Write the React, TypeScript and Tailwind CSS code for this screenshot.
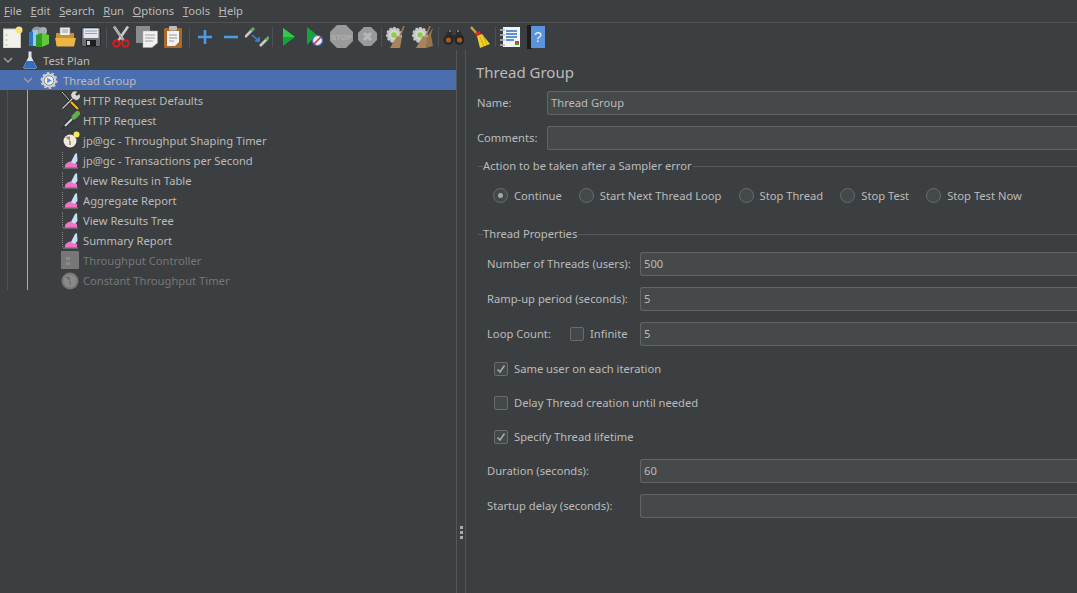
import React from 'react';

const Doc = () => (
    <svg width="20" height="22" viewBox="0 0 20 22">
        <rect x="0.5" y="3" width="17" height="19" fill="#f2f2ea" stroke="#c8c8c0" />
        <circle cx="3.5" cy="9" r="0.8" fill="#aaa" /><circle cx="3.5" cy="14" r="0.8" fill="#aaa" /><circle cx="3.5" cy="19" r="0.8" fill="#aaa" />
        <circle cx="16" cy="4" r="3.5" fill="#f6e27a" />
    </svg>
);
const Templates = () => (
    <svg width="20" height="22" viewBox="0 0 20 22">
        <circle cx="8" cy="6" r="5.5" fill="#8f9a9a" />
        <circle cx="14" cy="5" r="4" fill="#a6aeae" />
        <rect x="0" y="6" width="6" height="14" fill="#2a78c8" />
        <rect x="4" y="4" width="5" height="16" fill="#9fc8e8" />
        <path d="M7 9 L13 7 L13 21 L7 21 Z" fill="#2f9a24" />
        <path d="M13 7 L20 9 L20 18 L13 21 Z" fill="#62c83c" />
    </svg>
);
const OpenFolder = () => (
    <svg width="21" height="20" viewBox="0 0 21 20">
        <path d="M5 0.5 H15 V9 H5 Z" fill="#eee" stroke="#888" strokeWidth="0.6" />
        <path d="M7 3 H13 M7 5 H13" stroke="#999" />
        <path d="M1 6 H5 V8 H15 V6 H19 V18 a1 1 0 0 1 -1 1 H2 a1 1 0 0 1 -1 -1 Z" fill="#c9922e" />
        <path d="M0 11 H21 L19 19.5 H2 Z" fill="#eab544" />
    </svg>
);
const Floppy = () => (
    <svg width="20" height="20" viewBox="0 0 20 20">
        <rect x="0.5" y="0.5" width="19" height="19" rx="1.5" fill="#6b6f78" stroke="#2e2e2e" />
        <rect x="2.5" y="1.5" width="15" height="9.5" fill="#e4e8ee" />
        <path d="M4 4 H16 M4 6.5 H16" stroke="#8ca0b8" />
        <rect x="5" y="13" width="10" height="6" fill="#1f1f1f" />
        <rect x="6" y="14" width="3" height="4" fill="#ccc" />
    </svg>
);
const Scissors = () => (
    <svg width="18" height="22" viewBox="0 0 18 22">
        <path d="M2 0.5 L12 15 M16 0.5 L6 15" stroke="#c8c8c8" strokeWidth="2.6" />
        <path d="M2 0.5 L12 15" stroke="#888" strokeWidth="0.8" />
        <circle cx="4.5" cy="17.5" r="3.2" fill="none" stroke="#cf1f1f" strokeWidth="2.2" />
        <circle cx="13.5" cy="17.5" r="3.2" fill="none" stroke="#cf1f1f" strokeWidth="2.2" />
    </svg>
);
const Copy = () => (
    <svg width="22" height="22" viewBox="0 0 22 22">
        <rect x="0" y="0" width="14" height="17" fill="#8a8c8e" />
        <path d="M7 5 H21.5 V17 L16 21.5 H7 Z" fill="#f1f1f1" stroke="#aaa" strokeWidth="0.5" />
        <path d="M9 9 H19 M9 12 H19 M9 15 H17" stroke="#a0a0a0" />
    </svg>
);
const Paste = () => (
    <svg width="18" height="22" viewBox="0 0 18 22">
        <rect x="0" y="2" width="18" height="20" rx="1" fill="#a8692a" />
        <path d="M3 5 H15 V16 L11 20 H3 Z" fill="#f3f3f3" />
        <path d="M5 9 H13 M5 12 H13 M5 15 H10" stroke="#999" />
        <rect x="5" y="0" width="8" height="4.5" rx="1" fill="#b9bcbe" />
    </svg>
);
const Plus = () => (
    <svg width="16" height="16" viewBox="0 0 16 16">
        <path d="M8 1 V15 M1 8 H15" stroke="#4d9be0" strokeWidth="2.6" />
    </svg>
);
const Minus = () => (
    <svg width="16" height="16" viewBox="0 0 16 16">
        <path d="M1 8 H15" stroke="#4d9be0" strokeWidth="2.6" />
    </svg>
);
const Toggle = () => (
    <svg width="24" height="20" viewBox="0 0 24 20">
        <path d="M0 10 L7 3" stroke="#c9c9c9" strokeWidth="2.6" />
        <path d="M6 4 L9 1" stroke="#5fae5f" strokeWidth="3" />
        <path d="M15 19 L22 12" stroke="#c9c9c9" strokeWidth="2.6" />
        <path d="M21 13 L24 10" stroke="#5fae5f" strokeWidth="3" />
        <path d="M7 8 L14 14 M14 10 V14 H10" stroke="#3a86d8" strokeWidth="1.6" fill="none" />
    </svg>
);
const Play = () => (
    <svg width="12" height="18" viewBox="0 0 12 18">
        <path d="M0 0 L12 9 L0 18 Z" fill="#13a538" />
        <path d="M0 0 L12 9 L0 9 Z" fill="#30c850" />
    </svg>
);
const PlayNoPause = () => (
    <svg width="16" height="19" viewBox="0 0 16 19">
        <path d="M0 0 L10 8 L0 18 Z" fill="#13a538" />
        <circle cx="10.5" cy="13.5" r="5" fill="#e8eef8" stroke="#4474c4" strokeWidth="1.2" />
        <path d="M7 17 L14 10" stroke="#d83030" strokeWidth="1.6" />
    </svg>
);
const Stop = () => (
    <svg width="23" height="23" viewBox="0 0 23 23">
        <path d="M7 0 H16 L23 7 V16 L16 23 H7 L0 16 V7 Z" fill="#9a9a9a" />
        <text x="11.5" y="14.5" textAnchor="middle" fontSize="7.5" fontWeight="700" fill="#b0b0b0" fontFamily="Liberation Sans, sans-serif">STOP</text>
    </svg>
);
const Shutdown = () => (
    <svg width="19" height="19" viewBox="0 0 19 19">
        <path d="M6 0 H13 L19 6 V13 L13 19 H6 L0 13 V6 Z" fill="#9a9a9a" />
        <path d="M6 6 L13 13 M13 6 L6 13" stroke="#b8b8b8" strokeWidth="3" />
    </svg>
);
const GearBroom = ({ double = false }: { double?: boolean }) => (
    <svg width="22" height="22" viewBox="0 0 22 22">
        <circle cx="9" cy="9" r="7" fill="#c8c8c8" stroke="#c8c8c8" strokeWidth="2" strokeDasharray="2.5 1.5" />
        <circle cx="9" cy="9" r="4.5" fill="#d8d8d8" />
        <circle cx="9" cy="9" r="2.8" fill="#8ccf3c" />
        <path d="M19 0 L15 10" stroke="#9a7a50" strokeWidth="1.6" />
        <path d="M12 10 L17 11 L15 22 L5 22 Z" fill="#a8845a" />
        {double && <path d="M22 2 L20 9 L22 20 L15 22 L17 9 Z" fill="#96744e" />}
    </svg>
);
const Binoculars = () => (
    <svg width="22" height="18" viewBox="0 0 22 18">
        <path d="M5 2 H9 V7 H13 V2 H17 L21 11 H1 Z" fill="#2c2c2c" />
        <circle cx="5.5" cy="12" r="5" fill="#262626" /><circle cx="16.5" cy="12" r="5" fill="#262626" />
        <circle cx="5.5" cy="12" r="2.6" fill="#a85a1e" /><circle cx="16.5" cy="12" r="2.6" fill="#a85a1e" />
        <path d="M6 3 H8 M14 3 H16" stroke="#bbb" />
    </svg>
);
const YellowBroom = () => (
    <svg width="22" height="22" viewBox="0 0 22 22">
        <path d="M2 1 L9 9" stroke="#d0a23a" strokeWidth="2.4" />
        <path d="M6 7 L11 5 L12 9 L8 11 Z" fill="#d82828" />
        <path d="M8 10 L13 8 L21 18 L11 22 Z" fill="#f0d02a" />
        <path d="M11 11 L15 20 M14 10 L18 19" stroke="#c8a818" />
    </svg>
);
const FunctionList = () => (
    <svg width="20" height="22" viewBox="0 0 20 22">
        <rect x="3" y="1" width="17" height="20" fill="#f4f4f4" />
        <path d="M0 4 H5 M0 9 H5 M0 14 H5 M0 19 H5" stroke="#bbb" strokeWidth="1.5" />
        <path d="M6 5 H17 M6 8 H17 M6 11 H17 M6 14 H14" stroke="#2f6fc4" strokeWidth="1.5" />
        <rect x="15" y="15" width="4" height="2" fill="#c04040" /><rect x="15" y="17" width="4" height="2" fill="#38a038" />
    </svg>
);
const HelpBook = () => (
    <svg width="18" height="24" viewBox="0 0 18 24">
        <rect x="0" y="0" width="5" height="24" fill="#1c1c1c" />
        <rect x="4" y="1" width="14" height="22" fill="#5a94dc" />
        <text x="11" y="17" textAnchor="middle" fontSize="14" fill="#e8f0fa" fontFamily="Liberation Sans, sans-serif">?</text>
    </svg>
);

const Flask = () => (
    <svg width="14" height="18" viewBox="0 0 14 18">
        <path d="M5.5 0.5 H8.5 V6 L13.5 16 a1 1 0 0 1 -1 1.5 H1.5 a1 1 0 0 1 -1 -1.5 L5.5 6 Z" fill="#dfe6ee" />
        <path d="M3.6 10 H10.4 L13.2 16 a1 1 0 0 1 -1 1.2 H1.8 a1 1 0 0 1 -1 -1.2 Z" fill="#2f6ec6" />
    </svg>
);
const ThreadGear = () => (
    <svg width="19" height="19" viewBox="0 0 19 19">
        <circle cx="9.5" cy="9.5" r="7.5" fill="#d6d9dc" stroke="#c6cace" strokeWidth="3" strokeDasharray="2.5 2.2" />
        <circle cx="9.5" cy="9.5" r="5" fill="#eef0f3" stroke="#555" strokeWidth="0.7" />
        <path d="M7.5 6.5 L12.5 9.5 L7.5 12.5 Z" fill="#5b8fd4" />
    </svg>
);
const Tools = () => (
    <svg width="19" height="19" viewBox="0 0 19 19">
        <path d="M1 1 L9 10" stroke="#1e1e1e" strokeWidth="2.2" />
        <path d="M1 1 L9 10" stroke="#d8d8d8" strokeWidth="1" />
        <path d="M9.5 10.5 L17 18" stroke="#1e1e1e" strokeWidth="3.6" />
        <path d="M9.5 10.5 L17 18" stroke="#eeb91e" strokeWidth="2.4" />
        <path d="M1.5 17.5 L12 7" stroke="#1e1e1e" strokeWidth="2.6" />
        <path d="M1.5 17.5 L12 7" stroke="#cfcfcf" strokeWidth="1.2" />
        <path d="M11.5 7.5 A4 4 0 0 1 16.5 0.8 L14.5 3.2 L15.8 4.6 L18.5 2.8 A4 4 0 0 1 13 8.5 Z" fill="#d8d8d8" stroke="#222" strokeWidth="0.5" />
    </svg>
);
const Dropper = () => (
    <svg width="19" height="19" viewBox="0 0 19 19">
        <path d="M1 18 L5 14" stroke="#2a2a2a" strokeWidth="1.6" />
        <path d="M4 15 L12 7" stroke="#1e1e1e" strokeWidth="4" />
        <path d="M4 15 L12 7" stroke="#c8ccd0" strokeWidth="2.4" />
        <path d="M11 8 L13 6" stroke="#333" strokeWidth="5" />
        <path d="M13 6 L16.5 2.5" stroke="#62b04a" strokeWidth="5" strokeLinecap="round" />
    </svg>
);
const Timer = ({ off = false }: { off?: boolean }) => (
    <svg width="19" height="19" viewBox="0 0 19 19">
        <circle cx="9" cy="10" r="8.5" fill={off ? '#777' : '#3a3a48'} />
        <circle cx="9" cy="10" r="6.5" fill={off ? '#8a8a8a' : '#efeae0'} />
        <path d="M9 10 L4.5 6 L9 5.5 Z" fill={off ? '#6c6c6c' : '#a88a50'} />
        <path d="M9 10 L9 14" stroke={off ? '#6c6c6c' : '#8a6a30'} strokeWidth="1.2" />
        {!off && <circle cx="15.5" cy="3.5" r="3" fill="#f8e860" />}
    </svg>
);
const Graph = () => (
    <svg width="17" height="18" viewBox="0 0 17 18">
        <path d="M0.5 1 V17" stroke="#888" strokeDasharray="1 1" fill="none" />
        <path d="M1 17 H16" stroke="#8a8a8a" />
        <path d="M3 16.5 V14 Q7 9 10 11 L15 13 V16.5 Z" fill="#f272c4" />
        <path d="M9 11 L13 3 L15 2 L15.5 10 L13 13 Z" fill="#c6def6" />
    </svg>
);
const Controller = () => (
    <svg width="18" height="18" viewBox="0 0 18 18">
        <rect width="18" height="18" rx="1" fill="#777" />
        <rect x="5" y="6" width="4" height="3" fill="#8a8a8a" /><rect x="5" y="11" width="4" height="3" fill="#8a8a8a" />
    </svg>
);

const Sep = ({ cls }: { cls: string }) => <div className={`w-px h-[20px] bg-[#515151] shrink-0 ${cls}`} />;
const Tool = ({ children }: { children: React.ReactNode }) => (
    <div className="w-[26px] h-[26px] shrink-0 flex items-center justify-center">{children}</div>
);

const Chevron = () => (
    <svg width="10" height="6" viewBox="0 0 10 6" className="shrink-0">
        <path d="M1 1 L5 5 L9 1" stroke="#9a9c9e" strokeWidth="1.5" fill="none" />
    </svg>
);

const leaves: { icon: React.ReactNode; label: string; off?: boolean }[] = [
    { icon: <Tools />, label: 'HTTP Request Defaults' },
    { icon: <Dropper />, label: 'HTTP Request' },
    { icon: <Timer />, label: 'jp@gc - Throughput Shaping Timer' },
    { icon: <Graph />, label: 'jp@gc - Transactions per Second' },
    { icon: <Graph />, label: 'View Results in Table' },
    { icon: <Graph />, label: 'Aggregate Report' },
    { icon: <Graph />, label: 'View Results Tree' },
    { icon: <Graph />, label: 'Summary Report' },
    { icon: <Controller />, label: 'Throughput Controller', off: true },
    { icon: <Timer off />, label: 'Constant Throughput Timer', off: true },
];

const Field = ({ value, labelWidth, children }: { value?: string; labelWidth: string; children: React.ReactNode }) => (
    <div className="flex items-center h-[24px]">
        <div className={`shrink-0 flex items-center whitespace-nowrap ${labelWidth}`}>{children}</div>
        <div className="flex-1 h-[24px] bg-[#45494a] border border-r-0 border-[#646464] rounded-l-[3px] pl-[3px] flex items-center text-[#bbbbbb]">{value}</div>
    </div>
);

const Radio = ({ label, on = false, cls }: { label: string; on?: boolean; cls: string }) => (
    <div className={`flex items-center ${cls}`}>
        <div className="w-[15px] h-[15px] rounded-full border border-[#6b6b6b] bg-[#43494a] flex items-center justify-center mr-[6px]">
            {on && <div className="w-[5px] h-[5px] rounded-full bg-[#a8a8a8]" />}
        </div>
        <span>{label}</span>
    </div>
);

const Check = ({ on = false }: { on?: boolean }) => (
    <div className="w-[14px] h-[14px] rounded-[2px] border border-[#6b6b6b] bg-[#43494a] flex items-center justify-center shrink-0">
        {on && (
            <svg width="10" height="10" viewBox="0 0 10 10">
                <path d="M1.5 5.5 L4 8 L8.5 1.5" stroke="#a8a8a8" strokeWidth="1.6" fill="none" />
            </svg>
        )}
    </div>
);

const Section = ({ title }: { title: string }) => (
    <div className="flex items-center h-4 ml-[2px]">
        <div className="w-[5px] h-px bg-[#5a5a5a]" />
        <span className="whitespace-nowrap">{title}</span>
        <div className="flex-1 h-px bg-[#5a5a5a] ml-px" />
    </div>
);

const CheckRow = ({ label, on, cls }: { label: string; on?: boolean; cls: string }) => (
    <div className={`flex items-center gap-[6px] pl-[18px] h-4 ${cls}`}>
        <Check on={on} />
        <span>{label}</span>
    </div>
);

export default function App() {
    return (
        <div className="w-[1077px] h-[593px] overflow-hidden flex flex-col bg-[#3c3f41] text-[#bbbbbb] text-[11.2px] font-['Noto_Sans',sans-serif]">
            <div className="h-[23px] shrink-0 flex items-center pl-1 pt-px gap-[8.6px] border-b border-[#515151]">
                {['File', 'Edit', 'Search', 'Run', 'Options', 'Tools', 'Help'].map((m) => (
                    <span key={m}><span className="underline">{m[0]}</span>{m.slice(1)}</span>
                ))}
            </div>

            <div className="h-[27px] shrink-0 flex items-center">
                <Tool><Doc /></Tool><Tool><Templates /></Tool><Tool><OpenFolder /></Tool><Tool><Floppy /></Tool>
                <Sep cls="ml-[2px] mr-px" />
                <Tool><Scissors /></Tool><Tool><Copy /></Tool><Tool><Paste /></Tool>
                <Sep cls="ml-[3px] mr-[2px]" />
                <Tool><Plus /></Tool><Tool><Minus /></Tool><Tool><Toggle /></Tool>
                <Sep cls="ml-[2px] mr-[3px]" />
                <Tool><Play /></Tool><Tool><PlayNoPause /></Tool><Tool><Stop /></Tool><Tool><Shutdown /></Tool>
                <Sep cls="ml-px mr-px" />
                <Tool><GearBroom /></Tool><Tool><GearBroom double /></Tool>
                <Sep cls="ml-[3px] mr-[2px]" />
                <Tool><Binoculars /></Tool><Tool><YellowBroom /></Tool>
                <Sep cls="ml-[2px] mr-px" />
                <Tool><FunctionList /></Tool><Tool><HelpBook /></Tool>
            </div>

            <div className="flex-1 flex min-h-0">
                <div className="w-[456px] shrink-0">
                    <div className="h-5 flex items-center pl-[3px]">
                        <Chevron />
                        <div className="w-[18px] ml-[8px] mr-[4px] flex justify-center"><Flask /></div>
                        <span className="pt-[2px]">Test Plan</span>
                    </div>
                    <div className="h-5 flex items-center pl-[23px] bg-[#4b6eaf]">
                        <Chevron />
                        <div className="w-[18px] ml-[7px] mr-[5px] flex justify-center"><ThreadGear /></div>
                        <span className="pt-[2px]">Thread Group</span>
                    </div>
                    <div className="ml-[7px] border-l border-[#515151]">
                        <div className="ml-[19px] border-l border-[#85b4dc] pl-[32px]">
                            {leaves.map((l) => (
                                <div key={l.label} className={`h-5 flex items-center ${l.off ? 'text-[#777777]' : ''}`}>
                                    <div className="w-[20px] mr-[3px] flex justify-center">{l.icon}</div>
                                    <span className="pt-[2px]">{l.label}</span>
                                </div>
                            ))}
                        </div>
                    </div>
                </div>

                <div className="w-[10px] shrink-0 border-x border-[#555555] flex flex-col items-center">
                    <div className="mt-[476px] flex flex-col gap-[2px]">
                        <div className="w-[3px] h-[3px] bg-[#aaaaaa]" />
                        <div className="w-[3px] h-[3px] bg-[#aaaaaa]" />
                        <div className="w-[3px] h-[3px] bg-[#aaaaaa]" />
                    </div>
                </div>

                <div className="flex-1 min-w-0 pl-[10px] flex flex-col">
                    <div className="h-[22px] mt-[11px] flex items-center text-[15px] leading-none">Thread Group</div>
                    <div className="mt-[8px] flex flex-col gap-[11px] pl-px">
                        <Field value="Thread Group" labelWidth="w-[70px] pt-px">Name:</Field>
                        <Field labelWidth="w-[70px]">Comments:</Field>
                    </div>
                    <div className="mt-[8px]"><Section title="Action to be taken after a Sampler error" /></div>
                    <div className="mt-[7px] h-[30px] flex items-center pl-[17px]">
                        <Radio label="Continue" on cls="mr-[17px]" />
                        <Radio label="Start Next Thread Loop" cls="mr-[17px]" />
                        <Radio label="Stop Thread" cls="mr-[17px]" />
                        <Radio label="Stop Test" cls="mr-[17px]" />
                        <Radio label="Stop Test Now" cls="" />
                    </div>
                    <div className="mt-[15px]"><Section title="Thread Properties" /></div>
                    <div className="mt-[10px] flex flex-col gap-[11px] pl-[11px]">
                        <Field value="500" labelWidth="w-[153px]">Number of Threads (users):</Field>
                        <Field value="5" labelWidth="w-[153px]">Ramp-up period (seconds):</Field>
                        <Field value="5" labelWidth="w-[153px]">
                            <span className="w-[83px]">Loop Count:</span>
                            <Check />
                            <span className="ml-[6px]">Infinite</span>
                        </Field>
                    </div>
                    <CheckRow label="Same user on each iteration" on cls="mt-[15px]" />
                    <CheckRow label="Delay Thread creation until needed" cls="mt-[18px]" />
                    <CheckRow label="Specify Thread lifetime" on cls="mt-[18px]" />
                    <div className="mt-[14px] flex flex-col gap-[11px] pl-[11px]">
                        <Field value="60" labelWidth="w-[153px]">Duration (seconds):</Field>
                        <Field labelWidth="w-[153px]">Startup delay (seconds):</Field>
                    </div>
                </div>
            </div>
        </div>
    );
}
